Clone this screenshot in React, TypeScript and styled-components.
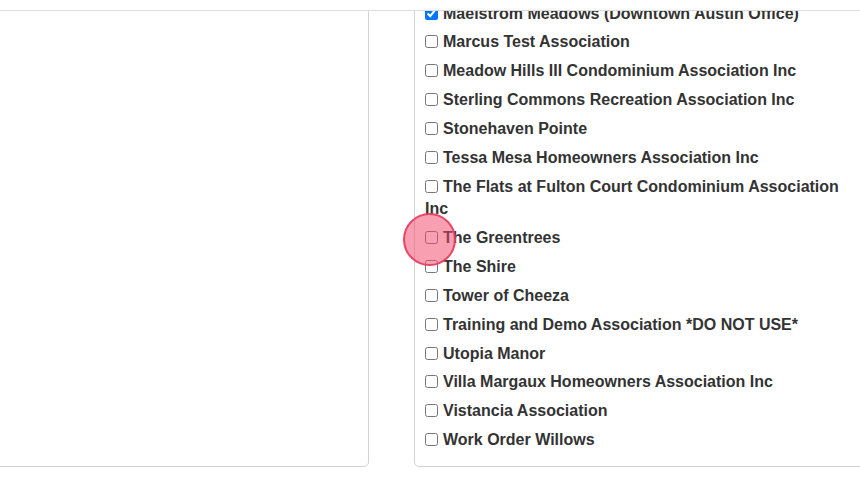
import React from "react";
import styled, { createGlobalStyle } from "styled-components";

const GlobalStyle = createGlobalStyle`
  html, body { margin: 0; padding: 0; background: #fff; overflow: hidden; }
  body { font-family: "Liberation Sans", Arial, sans-serif; }
`;

const Page = styled.div`
  position: relative;
  width: 860px;
  height: 481px;
  overflow: hidden;
  background: #fff;
`;

const Header = styled.div`
  position: relative;
  z-index: 2;
  height: 10px;
  background: #fff;
  border-bottom: 1px solid #dcdcdc;
`;

const Columns = styled.div`
  display: flex;
  align-items: stretch;
  gap: 45px;
  margin-top: -17.4px;
  margin-left: -20px;
`;

const Panel = styled.div<{ $width: number }>`
  flex: 0 0 ${(p) => p.$width}px;
  box-sizing: border-box;
  border: 1px solid #d4d4d4;
  border-radius: 5px;
  background: #fff;
`;

const List = styled.div`
  display: flex;
  flex-direction: column;
  gap: 6.1px;
  padding: 8px 10px 14.5px 10px;
`;

const Row = styled.label`
  display: block;
  font-size: 16px;
  line-height: 22.75px;
  font-weight: bold;
  color: #333;
`;

const Box = styled.input`
  width: 13px;
  height: 13px;
  margin: 0 5px 0 0;
  vertical-align: -1px;
`;

const Ripple = styled.div`
  position: absolute;
  left: 403px;
  top: 213px;
  width: 53px;
  height: 53px;
  box-sizing: border-box;
  border-radius: 50%;
  background: rgba(242, 72, 108, 0.52);
  border: 2px solid rgba(232, 60, 95, 0.9);
  z-index: 3;
`;

const items: { name: string; checked?: boolean }[] = [
  { name: "Maeistrom Meadows (Downtown Austin Office)", checked: true },
  { name: "Marcus Test Association" },
  { name: "Meadow Hills III Condominium Association Inc" },
  { name: "Sterling Commons Recreation Association Inc" },
  { name: "Stonehaven Pointe" },
  { name: "Tessa Mesa Homeowners Association Inc" },
  { name: "The Flats at Fulton Court Condominium Association Inc" },
  { name: "The Greentrees" },
  { name: "The Shire" },
  { name: "Tower of Cheeza" },
  { name: "Training and Demo Association *DO NOT USE*" },
  { name: "Utopia Manor" },
  { name: "Villa Margaux Homeowners Association Inc" },
  { name: "Vistancia Association" },
  { name: "Work Order Willows" },
];

export default function App() {
  return (
    <Page>
      <GlobalStyle />
      <Header />
      <Columns>
        <Panel $width={389} />
        <Panel $width={452}>
          <List>
            {items.map((it) => (
              <Row key={it.name}>
                <Box type="checkbox" defaultChecked={it.checked} />
                {it.name}
              </Row>
            ))}
          </List>
        </Panel>
      </Columns>
      <Ripple />
    </Page>
  );
}
